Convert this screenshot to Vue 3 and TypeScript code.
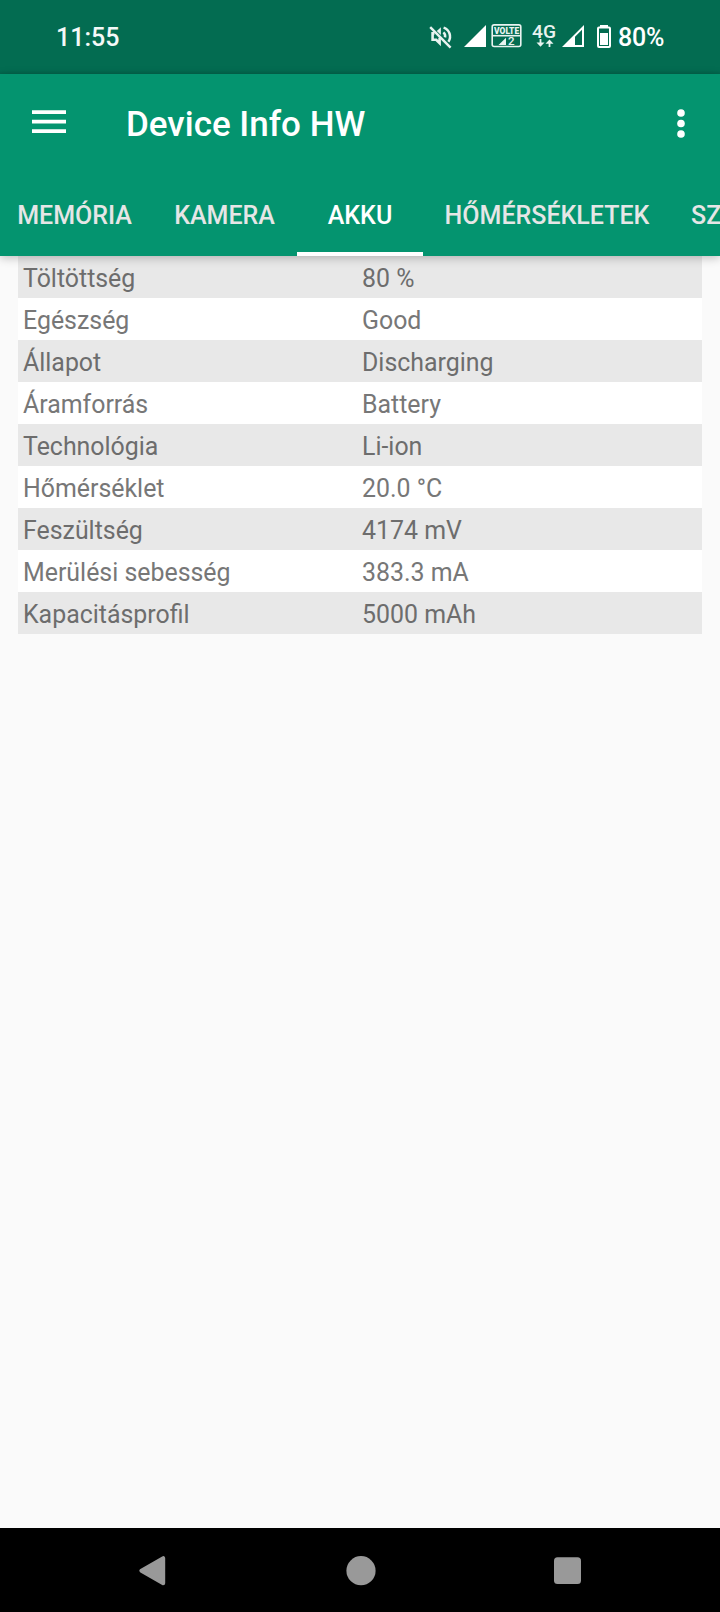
<script setup lang="ts">
interface Row { label: string; value: string }
interface Tab { id: string; title: string; active?: boolean }

const tabs: Tab[] = [
  { id: 'memory', title: 'MEMÓRIA' },
  { id: 'camera', title: 'KAMERA' },
  { id: 'battery', title: 'AKKU', active: true },
  { id: 'thermal', title: 'HŐMÉRSÉKLETEK' },
  { id: 'sensors', title: 'SZ' },
]

const rows: Row[] = [
  { label: 'Töltöttség', value: '80 %' },
  { label: 'Egészség', value: 'Good' },
  { label: 'Állapot', value: 'Discharging' },
  { label: 'Áramforrás', value: 'Battery' },
  { label: 'Technológia', value: 'Li-ion' },
  { label: 'Hőmérséklet', value: '20.0 °C' },
  { label: 'Feszültség', value: '4174 mV' },
  { label: 'Merülési sebesség', value: '383.3 mA' },
  { label: 'Kapacitásprofil', value: '5000 mAh' },
]
</script>

<template>
  <div class="screen">
    <div class="status">
      <span class="clock">11:55</span>
      <svg class="indicators" width="190" height="30" viewBox="426 22 190 30">
        <!-- muted speaker -->
        <g stroke="#e9f3f0" fill="none">
          <path d="M430.2 27.2L450.6 47.6" stroke-width="2.4" />
          <path d="M443.6 27.6A9.4 9.4 0 0 1 448.4 41.8M443.4 32.4A5 5 0 0 1 445 37.4" stroke-width="2.5" />
          <path d="M434.5 33.4H432.6V39.8H436.2L439.6 43.2V37.8" stroke-width="2.6" />
        </g>
        <path d="M440.9 27.2V35L436.8 31Z" fill="#e9f3f0" />
        <!-- first SIM -->
        <path d="M464 47H486V25Z" fill="#fff" />
        <rect x="492.2" y="24.9" width="28.6" height="21.6" rx="2" fill="none" stroke="#e9f3f0" stroke-width="1.6" />
        <path d="M492 35.7H521" stroke="#e9f3f0" stroke-width="1.6" />
        <text x="494" y="34" textLength="25.2" lengthAdjust="spacingAndGlyphs" class="volte">VOLTE</text>
        <path d="M498.5 45H506V37.7Z" fill="#e9f3f0" />
        <text x="508" y="45" class="sim">2</text>
        <!-- second SIM -->
        <text x="532" y="38" textLength="24" lengthAdjust="spacingAndGlyphs" class="network">4G</text>
        <path d="M540.5 39V44M549.5 47V42" stroke="#e9f3f0" stroke-width="1.8" />
        <path d="M536.5 42.4H544.5L540.5 46.8ZM545.5 43.8H553.5L549.5 39.4Z" fill="#e9f3f0" />
        <path d="M562 47H584V25ZM575 45V36.8L582 29.8V45Z" fill="#fff" fill-rule="evenodd" />
        <!-- battery -->
        <path d="M600 25H608V27H600Z" fill="#fff" />
        <rect x="598" y="27.5" width="12" height="19.5" rx="1" fill="none" stroke="#fff" stroke-width="2" />
        <path d="M600 33H608V45H600Z" fill="#fff" />
      </svg>
      <span class="percent">80%</span>
    </div>

    <header class="appbar">
      <div class="toolbar">
        <svg class="menu" width="34" height="24" viewBox="0 0 34 24">
          <path d="M0 2.1H34M0 11.6H34M0 21.1H34" stroke="#fff" stroke-width="3.6" />
        </svg>
        <h1 class="title">Device Info HW</h1>
        <svg class="more" width="8" height="29" viewBox="0 0 8 29">
          <circle cx="4" cy="4" r="3.8" /><circle cx="4" cy="14.5" r="3.8" /><circle cx="4" cy="25" r="3.8" />
        </svg>
      </div>
      <nav class="tabs">
        <div v-for="tab in tabs" :key="tab.id" class="tab" :class="[tab.id, { active: tab.active }]">
          <span>{{ tab.title }}</span>
        </div>
      </nav>
    </header>

    <main class="content">
      <div v-for="row in rows" :key="row.label" class="row">
        <span class="label">{{ row.label }}</span>
        <span class="value">{{ row.value }}</span>
      </div>
    </main>

    <footer class="navbar">
      <svg width="28" height="30" viewBox="0 0 28 30">
        <path d="M2.4 14.7L24.2 2.2V27.2Z" stroke="#999" stroke-width="4" stroke-linejoin="round" />
      </svg>
      <svg width="30" height="30" viewBox="0 0 30 30"><circle cx="15" cy="14.7" r="14.6" /></svg>
      <svg width="27" height="30" viewBox="0 0 27 30"><rect y="1.3" width="27" height="26.6" rx="3.5" /></svg>
    </footer>
  </div>
</template>

<style>
body {
  margin: 0;
  background: #fafafa;
}
</style>

<style scoped>
.screen {
  display: flex;
  flex-direction: column;
  width: 720px;
  height: 1612px;
  overflow: hidden;
  background: #fafafa;
  font-family: Roboto, "Noto Sans", sans-serif;
}
.status {
  display: flex;
  align-items: center;
  flex: none;
  height: 74px;
  box-sizing: border-box;
  padding-left: 56px;
  background: linear-gradient(#036c51 70px, #03644b 74px);
  color: #f4f9f8;
  font-size: 25px;
  font-weight: 500;
}
.clock {
  width: 370px;
}
.indicators {
  flex: none;
}
.percent {
  padding-left: 2px;
  color: #fff;
  letter-spacing: -0.2px;
}
.volte {
  font-size: 9.4px;
  font-weight: 900;
  fill: #e9f3f0;
}
.sim {
  font-size: 11.5px;
  font-weight: 500;
  fill: #e9f3f0;
}
.network {
  font-size: 18px;
  font-weight: 500;
  fill: #e9f3f0;
}
.appbar {
  position: relative;
  z-index: 1;
  flex: none;
  height: 182px;
  background: #04946f;
  box-shadow: 0 2px 9px rgba(0, 0, 0, 0.24);
}
.toolbar {
  display: flex;
  align-items: center;
  height: 98px;
  padding: 0 35px 0 32px;
}
.menu {
  margin-top: -3px;
}
.title {
  flex: 1;
  margin: 2px 0 0 60px;
  color: #fff;
  font-size: 35px;
  font-weight: 500;
  white-space: nowrap;
}
.more {
  fill: #fff;
}
.tabs {
  display: flex;
  height: 84px;
  overflow: hidden;
}
.tab {
  display: flex;
  flex: none;
  align-items: center;
  justify-content: center;
  box-sizing: border-box;
  padding-top: 6px;
  border-bottom: 4px solid transparent;
  color: #e6e6e6;
  font-size: 25px;
  font-weight: 500;
  white-space: nowrap;
}
.memory {
  width: 149px;
}
.camera {
  width: 148px;
  padding-left: 3px;
}
.battery {
  width: 126px;
}
.thermal {
  width: 248px;
}
.sensors {
  padding-left: 20px;
}
.active {
  border-color: #fff;
  color: #fff;
}
.content {
  flex: 1;
  padding: 0 18px;
}
.row {
  display: grid;
  grid-template-columns: 339px 1fr;
  align-items: center;
  height: 42px;
  box-sizing: border-box;
  padding: 2px 0 0 5px;
  background: #fff;
  color: #777;
  font-size: 24.9px;
}
.row:nth-child(odd) {
  background: #e8e8e8;
  color: #6d6d6d;
}
.navbar {
  display: flex;
  flex: none;
  align-items: center;
  justify-content: space-between;
  height: 84px;
  box-sizing: border-box;
  padding: 2px 139px 0;
  background: #000;
}
.navbar svg {
  fill: #999;
}
</style>
